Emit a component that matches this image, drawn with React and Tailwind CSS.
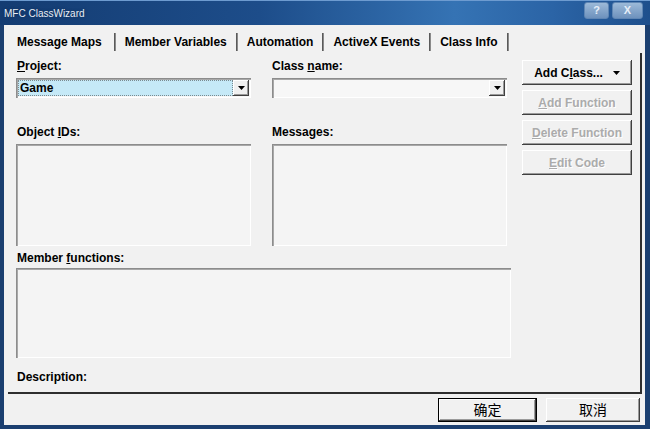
const raised =
  "shadow-[inset_-1px_-1px_0_#404040,inset_1px_1px_0_#ffffff,inset_-2px_-2px_0_#9a9a9a]";
const sunken =
  "shadow-[inset_1px_1px_0_#8c8c8c,inset_2px_2px_0_#a8a8a8,inset_-1px_-1px_0_#ffffff]";

function U({ children }) {
  return <span className="underline underline-offset-[1px]">{children}</span>;
}

function Arrow() {
  return (
    <svg width="7" height="4" viewBox="0 0 7 4">
      <path d="M0 0h7L3.5 4z" fill="#000" />
    </svg>
  );
}

function Combo({ value, selected }) {
  return (
    <div className={`flex h-[20px] w-[235px] bg-[#f7f7f7] p-[2px] ${sunken}`}>
      <div
        className={`flex flex-1 items-center pl-[2px] ${
          selected ? "bg-[#c5e9f7] outline outline-1 outline-dotted outline-[#7a8a90] -outline-offset-1" : ""
        }`}
      >
        {value}
      </div>
      <div className={`flex w-[16px] items-center justify-center bg-[#f0f0f0] ${raised}`}>
        <Arrow />
      </div>
    </div>
  );
}

function ListBox({ className }) {
  return <div className={`shrink-0 bg-[#f4f4f4] ${sunken} ${className}`} />;
}

function SideButton({ children, disabled }) {
  return (
    <div
      className={`flex h-[25px] w-[110px] items-center justify-center bg-[#f1f1f1] ${raised} ${
        disabled ? "text-[#ababab] [text-shadow:1px_1px_0_#ffffff]" : "text-black"
      }`}
    >
      {children}
    </div>
  );
}

function Sep() {
  return <div className="h-[18px] w-[2px] border-l border-[#5a5a5a] bg-[#8a8a8a]" />;
}

export default function App() {
  const tabs = ["Member Variables", "Automation", "ActiveX Events", "Class Info"];
  return (
    <div
      className="flex h-[429px] w-[650px] flex-col overflow-hidden bg-[#1b3f70] text-[12px] font-bold text-black"
      style={{ fontFamily: '"Liberation Sans", "Noto Sans CJK SC", sans-serif' }}
    >
      {/* title bar */}
      <div className="flex h-[25px] shrink-0 items-start justify-between bg-[linear-gradient(90deg,#143c72_0%,#1d4d8a_40%,#3573b4_70%,#2b64a6_85%,#1e4f8c_100%)] shadow-[inset_0_1px_0_#6d9bd0]">
        <span className="mt-[6px] pl-[4px] text-[10px] font-normal text-[#e8eef6] [text-shadow:0_0_3px_#0d2a50]">
          MFC ClassWizard
        </span>
        <div className="mr-[7px] mt-[2px] flex gap-[3px]">
          <div className="flex h-[17px] w-[25px] items-center justify-center rounded-[3px] border border-[#5f86b4] bg-[linear-gradient(180deg,#9cb9d8,#6e92bd)] text-[11px] text-[#e6eef8]">
            ?
          </div>
          <div className="flex h-[17px] w-[31px] items-center justify-center rounded-[3px] border border-[#5f86b4] bg-[linear-gradient(180deg,#9cb9d8,#6e92bd)] text-[11px] text-[#e6eef8]">
            X
          </div>
        </div>
      </div>

      {/* window body */}
      <div className="mx-[4px] mb-[4px] mr-[5px] flex flex-1 flex-col bg-[#f1f1f1]">
        {/* tabs */}
        <div className="flex h-[28px] shrink-0 items-center pl-[4px] pt-[5px]">
          <div className="pl-[9px] pr-[12px]">Message Maps</div>
          <Sep />
          {tabs.map((t) => (
            <div key={t} className="flex items-center">
              <div className="px-[9px]">{t}</div>
              <Sep />
            </div>
          ))}
        </div>

        {/* panel */}
        <div className="ml-[4px] mr-[3px] flex h-[341px] shrink-0 flex-col border-b-2 border-r-2 border-b-[#2e2e2e] border-r-[#2e2e2e] pl-[8px]">
          <div className="flex">
            <div className="flex w-[506px] flex-col">
              <div className="flex gap-[21px] pt-[6px]">
                <div className="flex w-[235px] flex-col">
                  <div className="h-[14px] pl-[1px] leading-[14px]">
                    <U>P</U>roject:
                  </div>
                  <div className="mt-[5px]">
                    <Combo value="Game" selected />
                  </div>
                  <div className="mt-[27px] h-[14px] pl-[1px] leading-[14px]">
                    Object <U>I</U>Ds:
                  </div>
                  <ListBox className="mt-[5px] h-[102px] w-[235px]" />
                </div>
                <div className="flex w-[235px] flex-col">
                  <div className="h-[14px] leading-[14px]">
                    Class <U>n</U>ame:
                  </div>
                  <div className="mt-[5px]">
                    <Combo value="" />
                  </div>
                  <div className="mt-[27px] h-[14px] leading-[14px]">
                    Messa<U>g</U>es:
                  </div>
                  <ListBox className="mt-[5px] h-[102px] w-[235px]" />
                </div>
              </div>
            </div>
            <div className="flex flex-col gap-[5px] pt-[7px]">
              <SideButton>
                <span>
                  Add C<U>l</U>ass...
                </span>
                <span className="ml-[10px] mt-[1px]">
                  <Arrow />
                </span>
              </SideButton>
              <SideButton disabled>
                <span>
                  <U>A</U>dd Function
                </span>
              </SideButton>
              <SideButton disabled>
                <span>
                  <U>D</U>elete Function
                </span>
              </SideButton>
              <SideButton disabled>
                <span>
                  <U>E</U>dit Code
                </span>
              </SideButton>
            </div>
          </div>
          <div className="mt-[5px] h-[14px] pl-[1px] leading-[14px]">
            Member <U>f</U>unctions:
          </div>
          <ListBox className="mt-[3px] h-[90px] w-[495px]" />
          <div className="mt-[12px] h-[14px] pl-[1px] leading-[14px]">Description:</div>
        </div>

        {/* footer */}
        <div className="flex flex-1 items-start justify-end gap-[9px] pr-[5px] pt-[4px]">
          <div className="flex h-[24px] w-[99px] items-center justify-center border border-black bg-[#f1f1f1] text-[14px] font-normal shadow-[inset_-1px_-1px_0_#404040,inset_1px_1px_0_#ffffff,inset_-2px_-2px_0_#9a9a9a]">
            确定
          </div>
          <div className={`flex h-[24px] w-[94px] items-center justify-center bg-[#f1f1f1] text-[14px] font-normal ${raised}`}>
            取消
          </div>
        </div>
      </div>
    </div>
  );
}
